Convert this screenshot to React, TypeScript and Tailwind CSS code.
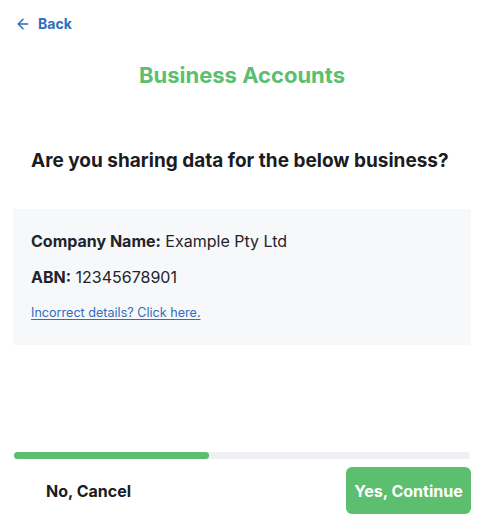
import { ArrowLeft } from "lucide-react";

export default function App() {
  return (
    <div
      className="w-[490px] h-[526px] bg-white flex flex-col"
      style={{ fontFamily: "Inter, 'Noto Sans', sans-serif" }}
    >
      <div className="w-[458px] ml-[13px] flex flex-col flex-1">
        {/* Back */}
        <button className="flex items-center gap-[7px] mt-[15px] ml-[2px] text-[#2f6fbd] font-bold text-[14px] leading-[18px]">
          <ArrowLeft size={16} strokeWidth={2.25} />
          <span>Back</span>
        </button>

        {/* Title */}
        <h1 className="mt-[28px] text-center text-[#5bbf6f] font-bold text-[22px] leading-[28px]">
          Business Accounts
        </h1>

        {/* Question */}
        <h2 className="mt-[60px] ml-[18px] text-[#1a1c22] font-bold text-[19px] leading-[24px]">
          Are you sharing data for the below business?
        </h2>

        {/* Card */}
        <div className="mt-[36px] h-[136px] bg-[#f7f8fa] px-[18px] pt-[22px] text-[16px] text-[#22242a]">
          <p className="leading-[20px]">
            <span className="font-bold">Company Name:</span> Example Pty Ltd
          </p>
          <p className="mt-[16px] leading-[20px]">
            <span className="font-bold">ABN:</span> 12345678901
          </p>
          <a className="inline-block mt-[18px] text-[12.6px] leading-[16px] text-[#2f6fbd] underline underline-offset-2">
            Incorrect details? Click here.
          </a>
        </div>

        <div className="flex-1" />

        {/* Progress */}
        <div className="h-[7px] ml-[1px] w-[456px] rounded-full bg-[#eef0f3]">
          <div className="h-full w-[195px] rounded-full bg-[#5bbf6f]" />
        </div>

        {/* Buttons */}
        <div className="mt-[8px] mb-[12px] flex items-center justify-between">
          <button className="ml-[33px] text-[16px] font-bold text-[#1a1c22]">
            No, Cancel
          </button>
          <button className="w-[125px] h-[47px] rounded-[6px] bg-[#5bbf6f] text-white font-bold text-[16px]">
            Yes, Continue
          </button>
        </div>
      </div>
    </div>
  );
}
